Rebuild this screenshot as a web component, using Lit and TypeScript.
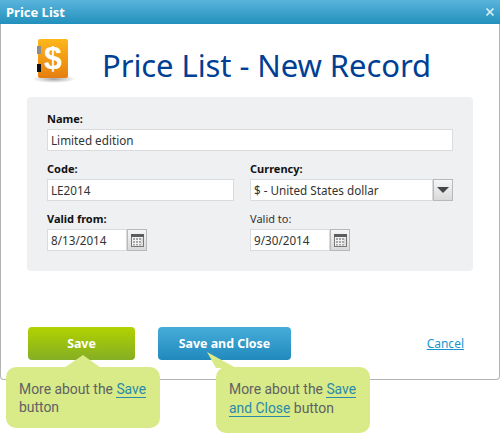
import { LitElement, html, css } from "lit";
import { customElement } from "lit/decorators.js";

const calendar = html`<svg width="13" height="13" viewBox="0 0 13 13">
  <rect x="0.5" y="0.5" width="12" height="12" fill="#f2f2f2" stroke="#777"/>
  <rect x="0" y="0" width="13" height="3" fill="#5a5d60"/>
  <path d="M2 4h2v2H2zM5 4h2v2H5zM8 4h2v2H8zM2 7h2v2H2zM5 7h2v2H5zM8 7h2v2H8zM2 10h2v1.500H2zM5 10h2v1.500H5zM8 10h2v1.500H8z" fill="#a4a6a8"/>
  <path d="M10.500 4h1v7.500h-1z" fill="#c4c6c8"/>
</svg>`;

@customElement("app-root")
export class AppRoot extends LitElement {
  static styles = css`
    :host { display: block; position: relative; width: 500px; height: 436px; background: #fff; overflow: hidden; font-family: "Noto Sans", "DejaVu Sans", sans-serif; }
    .window { box-sizing: border-box; width: 500px; height: 380px; border: 1px solid #b4b4b4; border-top: none; border-radius: 0 0 4px 4px; display: flex; flex-direction: column; }
    .titlebar { margin: 0 -1px; height: 24px; background: linear-gradient(#5ab4dc, #2290bc); display: flex; align-items: center; justify-content: space-between; padding: 0 6px 0 6px; color: #fff; font-weight: 700; font-size: 13px; }
    .close { width: 8px; height: 8px; display: block; }
    .head { display: flex; height: 73px; padding-left: 31px; }
    .logo { width: 44px; height: 47px; margin-top: 13px; display: block; }
    h1 { margin: 15px 0 0 26px; font-size: 31px; line-height: 52px; font-weight: 400; letter-spacing: -0.08px; color: #003f94; white-space: nowrap; }
    .panel { box-sizing: border-box; margin-left: 26px; width: 446px; height: 174px; background: #eff0f2; border-radius: 4px; padding: 14px 20px 0; display: grid; grid-template-columns: 187px 203px; column-gap: 16px; grid-auto-rows: 50px; }
    .wide { grid-column: 1 / 3; }
    .field { display: flex; flex-direction: column; }
    label { height: 18px; font-size: 11px; line-height: 15px; font-weight: 700; color: #111; }
    label.plain { font-weight: 400; color: #333; }
    .ctl { display: flex; height: 22px; }
    .box { box-sizing: border-box; flex: 1; height: 22px; background: #fff; border: 1px solid #d9dbdd; padding: 0 3px; font-size: 11.7px; line-height: 21px; color: #333; white-space: nowrap; overflow: hidden; }
    .date { flex: none; width: 80px; }
    .btn { box-sizing: border-box; width: 20px; height: 22px; border: 1px solid #b7b9bb; background: linear-gradient(#f6f6f6, #d9d9d9); display: flex; align-items: center; justify-content: center; flex: none; }
    .arrow { width: 0; height: 0; border-left: 6px solid transparent; border-right: 6px solid transparent; border-top: 6px solid #44474a; }
    .actions { display: flex; align-items: flex-start; margin-top: 56px; padding-left: 27px; }
    .action { box-sizing: border-box; height: 33px; border-radius: 4px; color: #fff; font-weight: 700; font-size: 12.4px; display: flex; align-items: center; justify-content: center; }
    .save { width: 107px; background: linear-gradient(#b2d200, #84ae24); }
    .saveclose { width: 133px; margin-left: 23px; background: linear-gradient(#46add9, #2189bd); }
    .cancel { margin-left: auto; margin-right: 35px; margin-top: 9px; font-size: 12px; line-height: 16px; color: #1a94cc; text-decoration: underline; }
    .tip { position: absolute; box-sizing: border-box; width: 154px; background: #d9ea88; border-radius: 10px; color: #5e6264; font-family: Roboto, sans-serif; font-size: 13.9px; line-height: 18px; padding: 13px 6px 0 13px; }
    .tip a { color: #2a8aa8; text-decoration: none; border-bottom: 1px solid #2a8aa8; }
    .tip svg { position: absolute; display: block; }
    .t1 { left: 6px; top: 367px; height: 61px; }
    .t1 svg { left: 58px; top: -12px; }
    .t2 { left: 216px; top: 367px; height: 66px; line-height: 19px; }
    .t2 svg { left: -10px; top: -15px; }
  `;

  render() {
    return html`
      <div class="window">
        <div class="titlebar">
          <span>Price List</span>
          <svg class="close" viewBox="0 0 8 8"><path d="M0.5 0.5l7 7M7.5 0.5l-7 7" stroke="#d5ecf5" stroke-width="1.6"/></svg>
        </div>
        <div class="head">
          <svg class="logo" viewBox="0 0 44 47">
            <defs>
              <linearGradient id="or" x1="0" y1="0" x2="0" y2="1"><stop offset="0" stop-color="#fdb81a"/><stop offset="1" stop-color="#e57e10"/></linearGradient>
              <radialGradient id="sh"><stop offset="0" stop-color="#777" stop-opacity=".7"/><stop offset="1" stop-color="#888" stop-opacity="0"/></radialGradient>
            </defs>
            <ellipse cx="22" cy="42" rx="22" ry="4" fill="url(#sh)"/>
            <rect x="6" y="2" width="30" height="39" rx="2" fill="url(#or)"/>
            <rect x="5" y="9" width="4" height="8" fill="#8d8d8d"/>
            <rect x="5" y="27" width="4" height="8" fill="#111"/>
            <text x="21" y="32" text-anchor="middle" font-family="'Liberation Sans', sans-serif" font-weight="700" font-size="32" fill="#fff">$</text>
          </svg>
          <h1>Price List - New Record</h1>
        </div>
        <div class="panel">
          <div class="field wide"><label>Name:</label><div class="ctl"><div class="box">Limited edition</div></div></div>
          <div class="field"><label>Code:</label><div class="ctl"><div class="box">LE2014</div></div></div>
          <div class="field"><label>Currency:</label><div class="ctl"><div class="box">$ - United States dollar</div><div class="btn"><span class="arrow"></span></div></div></div>
          <div class="field"><label>Valid from:</label><div class="ctl"><div class="box date">8/13/2014</div><div class="btn">${calendar}</div></div></div>
          <div class="field"><label class="plain">Valid to:</label><div class="ctl"><div class="box date">9/30/2014</div><div class="btn">${calendar}</div></div></div>
        </div>
        <div class="actions">
          <div class="action save">Save</div>
          <div class="action saveclose">Save and Close</div>
          <a class="cancel">Cancel</a>
        </div>
      </div>
      <div class="tip t1">
        <svg width="50" height="13" viewBox="0 0 50 13"><path d="M0 13L19 0L37 13Z" fill="#d9ea88"/></svg>
        More about the <a>Save</a> button
      </div>
      <div class="tip t2">
        <svg width="40" height="16" viewBox="0 0 40 16"><path d="M1 0L10 16H30Z" fill="#d9ea88"/></svg>
        More about the <a>Save</a> <a>and Close</a> button
      </div>
    `;
  }
}
